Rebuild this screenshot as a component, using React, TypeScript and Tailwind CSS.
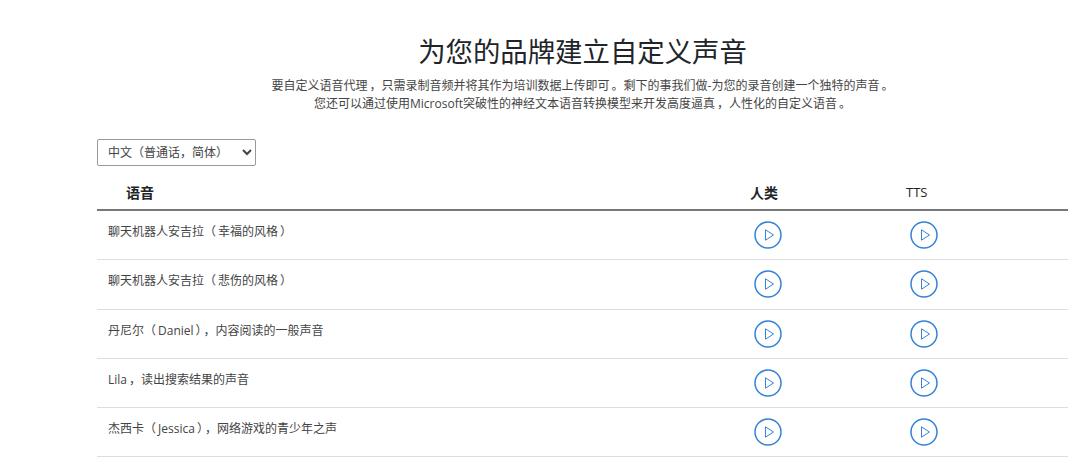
const ROWS = [
  '聊天机器人安吉拉（幸福的风格）',
  '聊天机器人安吉拉（悲伤的风格）',
  '丹尼尔（Daniel），内容阅读的一般声音',
  'Lila，读出搜索结果的声音',
  '杰西卡（Jessica），网络游戏的青少年之声',
]

// full-width punctuation has a little more room around it in the screenshot
const PUNCT: Record<string, string> = {
  '（': 'mr-[2px]',
  '）': 'ml-[2px]',
  '，': 'ml-[2px]',
  '。': 'ml-[2px]',
}

function Cjk({ text }: { text: string }) {
  return (
    <>
      {text.split(/([（），。])/).map((part, i) =>
        i % 2 === 1 ? (
          <span key={i} className={PUNCT[part]}>
            {part}
          </span>
        ) : (
          part
        ),
      )}
    </>
  )
}

function PlayButton() {
  return (
    <button type="button" aria-label="播放" className="w-7 h-7 block text-[#3583d8]">
      <svg viewBox="0 0 28 28" width="28" height="28" fill="none" stroke="currentColor">
        <circle cx="14" cy="14" r="13" strokeWidth="1.5" />
        <path d="M11.5 8.8 L19.5 14 L11.5 19.2 Z" strokeWidth="1" strokeLinejoin="round" />
      </svg>
    </button>
  )
}

export default function App() {
  return (
    <div className="h-[472px] overflow-hidden bg-white pl-[97px] pr-3 pt-[33px] text-[#212529] font-['Open_Sans','Noto_Sans_CJK_SC',sans-serif]">
      <h1 className="text-center text-[27.4px] leading-[38px] font-normal">为您的品牌建立自定义声音</h1>
      <div className="mt-[6px] text-center text-xs leading-[18px] text-[#444]">
        <p>
          <Cjk text="要自定义语音代理，只需录制音频并将其作为培训数据上传即可。剩下的事我们做-为您的录音创建一个独特的声音。" />
        </p>
        <p>
          <Cjk text="您还可以通过使用Microsoft突破性的神经文本语音转换模型来开发高度逼真，人性化的自定义语音。" />
        </p>
      </div>
      <select className="block mt-[26px] w-[159px] h-[27px] pl-[6px] bg-white border border-[#999] rounded-[2px] text-xs text-[#444]">
        <option>中文（普通话，简体）</option>
      </select>
      <div className="mt-4 flex h-[29px] items-center border-b-2 border-[#777] pb-[6px]">
        <div className="w-[653px] pl-[29px] text-sm font-bold">语音</div>
        <div className="w-[156px] text-sm font-bold">人类</div>
        <div className="text-[13px]">TTS</div>
      </div>
      {ROWS.map((row) => (
        <div key={row} className="flex h-[49.25px] border-b border-[#dedede]">
          <div className="w-[657px] pl-[11px] pt-3 text-xs leading-[18px] text-[#444]">
            <Cjk text={row} />
          </div>
          <div className="w-[156px] pt-[10px]">
            <PlayButton />
          </div>
          <div className="pt-[10px]">
            <PlayButton />
          </div>
        </div>
      ))}
    </div>
  )
}
